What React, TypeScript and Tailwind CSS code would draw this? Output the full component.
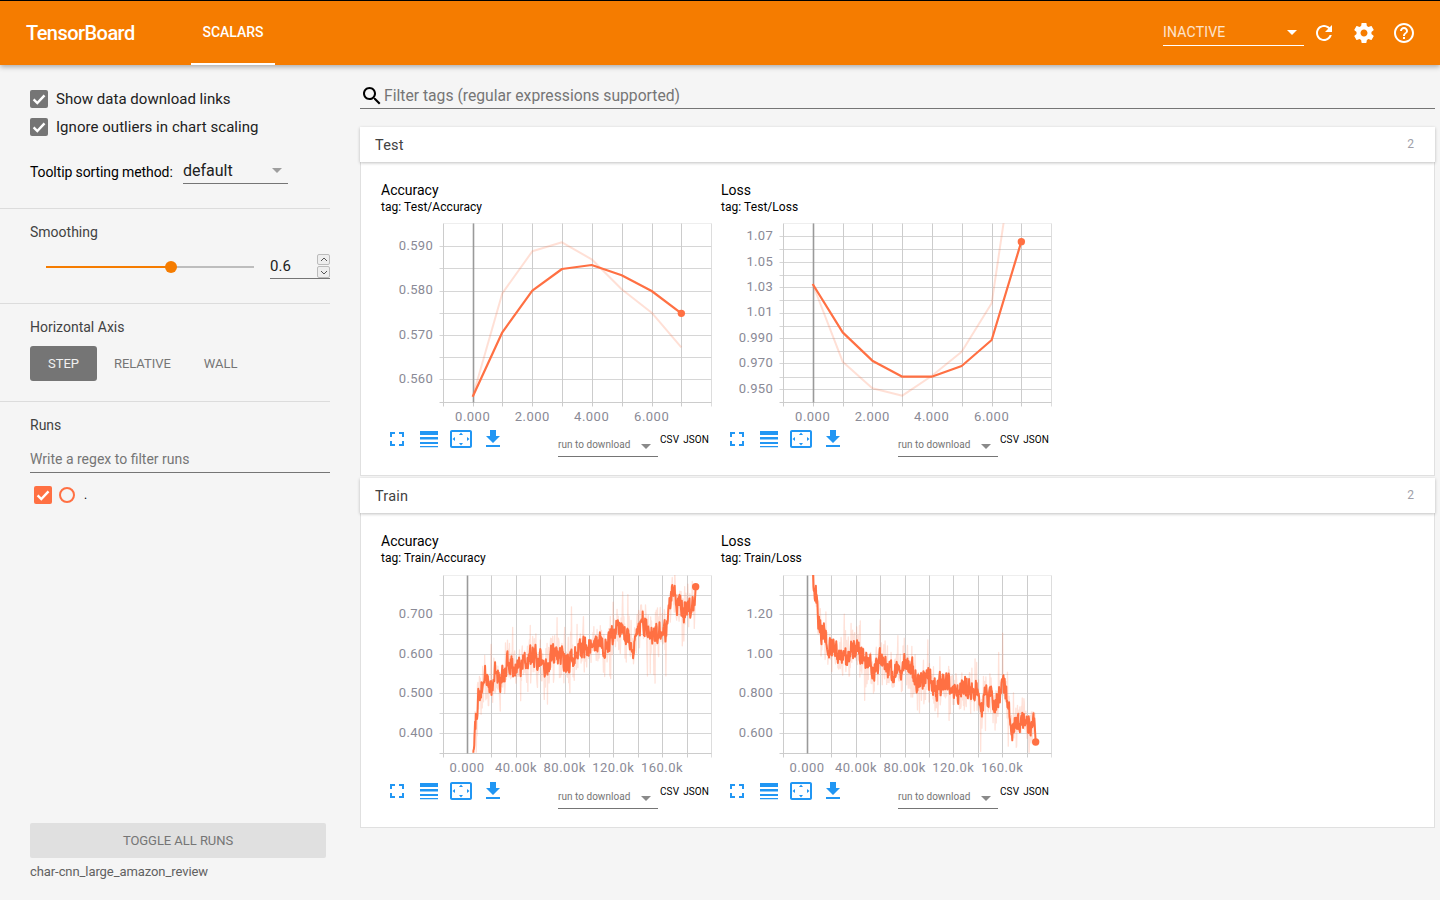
import React from "react";

type P = [number, number];

const ICON = {
  fullscreen: "M7 14H5v5h5v-2H7v-3zm-2-4h2V7h3V5H5v5zm12 7h-3v2h5v-5h-2v3zM14 5v2h3v3h2V5h-5z",
  reorder: "M3 4h18v4H3zM3 10h18v2.6H3zM3 15h18v2H3zM3 19h18v1.3H3z",
  overscan: "M12.01 5.5L10 8h4l-1.99-2.5zM18 10v4l2.5-1.99L18 10zM6 10l-2.5 2.01L6 14v-4zm8 6h-4l2.01 2.5L14 16zm7-13H3c-1.1 0-2 .9-2 2v14c0 1.1.9 2 2 2h18c1.1 0 2-.9 2-2V5c0-1.1-.9-2-2-2zm0 16.01H3V4.99h18v14.02z",
  download: "M19 9h-4V3H9v6H5l7 7 7-7zM5 18v2h14v-2H5z",
  refresh: "M17.65 6.35C16.2 4.9 14.21 4 12 4c-4.42 0-7.99 3.58-7.99 8s3.57 8 7.99 8c3.73 0 6.84-2.55 7.73-6h-2.08c-.82 2.33-3.04 4-5.65 4-3.31 0-6-2.69-6-6s2.69-6 6-6c1.66 0 3.14.69 4.22 1.78L13 11h7V4l-2.35 2.35z",
  settings: "M19.43 12.98c.04-.32.07-.64.07-.98s-.03-.66-.07-.98l2.11-1.65c.19-.15.24-.42.12-.64l-2-3.46c-.12-.22-.39-.3-.61-.22l-2.49 1c-.52-.4-1.08-.73-1.69-.98l-.38-2.65C14.46 2.18 14.25 2 14 2h-4c-.25 0-.46.18-.49.42l-.38 2.65c-.61.25-1.17.59-1.69.98l-2.49-1c-.23-.09-.49 0-.61.22l-2 3.46c-.13.22-.07.49.12.64l2.11 1.65c-.04.32-.07.65-.07.98s.03.66.07.98l-2.11 1.65c-.19.15-.24.42-.12.64l2 3.46c.12.22.39.3.61.22l2.49-1c.52.4 1.08.73 1.69.98l.38 2.65c.03.24.24.42.49.42h4c.25 0 .46-.18.49-.42l.38-2.65c.61-.25 1.17-.59 1.69-.98l2.49 1c.23.09.49 0 .61-.22l2-3.46c.12-.22.07-.49-.12-.64l-2.11-1.65zM12 15.5c-1.93 0-3.5-1.57-3.5-3.5s1.57-3.5 3.5-3.5 3.5 1.57 3.5 3.5-1.57 3.5-3.5 3.5z",
  help: "M11 18h2v-2h-2v2zm1-16C6.48 2 2 6.48 2 12s4.48 10 10 10 10-4.48 10-10S17.52 2 12 2zm0 18c-4.41 0-8-3.59-8-8s3.59-8 8-8 8 3.59 8 8-3.59 8-8 8zm0-14c-2.21 0-4 1.79-4 4h2c0-1.1.9-2 2-2s2 .9 2 2c0 2-3 1.75-3 5h2c0-2.25 3-2.5 3-5 0-2.21-1.79-4-4-4z",
  search: "M15.5 14h-.79l-.28-.27C15.41 12.59 16 11.11 16 9.5 16 5.91 13.09 3 9.5 3S3 5.91 3 9.5 5.91 16 9.5 16c1.61 0 3.09-.59 4.23-1.57l.27.28v.79l5 4.99L20.49 19l-4.99-5zm-6 0C7.01 14 5 11.99 5 9.5S7.01 5 9.5 5 14 7.01 14 9.5 11.99 14 9.5 14z",
};

function Icon({ d, className }: { d: string; className: string }) {
  return (
    <svg viewBox="0 0 24 24" className={className} fill="currentColor">
      <path d={d} />
    </svg>
  );
}

function rng(seed: number) {
  return () => {
    seed |= 0;
    seed = (seed + 0x6d2b79f5) | 0;
    let t = Math.imul(seed ^ (seed >>> 15), 1 | seed);
    t = (t + Math.imul(t ^ (t >>> 7), 61 | t)) ^ t;
    return ((t ^ (t >>> 14)) >>> 0) / 4294967296;
  };
}

function interp(pts: P[], x: number) {
  for (let i = 1; i < pts.length; i++) {
    if (x <= pts[i][0]) {
      const [x0, y0] = pts[i - 1];
      const [x1, y1] = pts[i];
      return y0 + ((y1 - y0) * (x - x0)) / (x1 - x0 || 1);
    }
  }
  return pts[pts.length - 1][1];
}

// Builds the noisy raw and smoothed series of a training curve.
function noisy(pts: P[], seed: number, endY: number): { raw: P[]; smooth: P[] } {
  const r = rng(seed);
  const raw: P[] = [];
  const smooth: P[] = [];
  const x0 = pts[0][0];
  const x1 = pts[pts.length - 1][0];
  let walk = 0;
  for (let x = x0; x <= x1; x += 1.2) {
    const base = interp(pts, x);
    walk = walk * 0.35 + (r() - 0.5) * 64;
    const s = base + walk;
    smooth.push([x, s]);
    const spike = r() < 0.1 ? (r() - 0.5) * 280 : (r() - 0.5) * 120;
    raw.push([x, s + spike]);
  }
  smooth.push([x1 + 2, endY]);
  raw.push([x1 + 2, endY]);
  return { raw, smooth };
}

type ChartProps = {
  title: string;
  tag: string;
  ox: number;
  oy: number;
  left: number;
  right: number;
  top: number;
  bottom: number;
  vs: number[];
  zero: number;
  hs: number[];
  yl: [string, number][];
  xl: [string, number][];
  labelY: number;
  raw: P[];
  smooth: P[];
  rawW?: number;
  smoothW?: number;
  rawO?: number;
};

function Chart(c: ChartProps) {
  const X = (z: number) => z / 3 + c.ox;
  const Y = (z: number) => z / 3 + c.oy;
  const sx = (z: number) => Math.round(X(z)) + 0.5;
  const sy = (z: number) => Math.round(Y(z)) + 0.5;
  const path = (pts: P[]) => pts.map((p, i) => `${i ? "L" : "M"}${X(p[0]).toFixed(2)} ${Y(p[1]).toFixed(2)}`).join("");
  const id = `clip-${c.tag.replace("/", "-")}`;
  const last = c.smooth[c.smooth.length - 1];
  return (
    <div className="w-[340px] flex flex-col">
      <div className="h-[61px] pt-[19px] text-black">
        <div className="text-[14px] leading-[18px]">{c.title}</div>
        <div className="text-[12px] leading-[15px] mt-px tracking-[0.05px]">tag: {c.tag}</div>
      </div>
      <svg width={340} height={204} className="block" style={{ fontFamily: "Roboto, sans-serif" }}>
        <defs>
          <clipPath id={id}>
            <rect x={X(c.left)} y={Y(c.top)} width={X(c.right) - X(c.left)} height={Y(c.bottom) - Y(c.top)} />
          </clipPath>
        </defs>
        <line x1={sx(c.left)} x2={sx(c.right)} y1={sy(c.top)} y2={sy(c.top)} stroke="#eeeeee" />
        <line x1={sx(c.right)} x2={sx(c.right)} y1={sy(c.top)} y2={sy(c.bottom) + 4} stroke="#dddddd" />
        {c.hs.map((h) => (
          <line key={h} x1={sx(c.left) - 4} x2={sx(c.right)} y1={sy(h)} y2={sy(h)} stroke="#d6d6d6" />
        ))}
        {c.vs.map((v) => (
          <line key={v} x1={sx(v)} x2={sx(v)} y1={sy(c.top)} y2={sy(c.bottom) + 4} stroke="#cccccc" />
        ))}
        <line x1={sx(c.left)} x2={sx(c.left)} y1={sy(c.top)} y2={sy(c.bottom) + 4} stroke="#cccccc" />
        <line x1={sx(c.left) - 4} x2={sx(c.right)} y1={sy(c.bottom)} y2={sy(c.bottom)} stroke="#cccccc" />
        <line x1={sx(c.zero)} x2={sx(c.zero)} y1={sy(c.top)} y2={sy(c.bottom)} stroke="#9a9a9a" strokeWidth={1.6} />
        <g clipPath={`url(#${id})`} fill="none" strokeLinejoin="round">
          <path d={path(c.raw)} stroke="#ff7043" strokeOpacity={c.rawO ?? 0.22} strokeWidth={c.rawW ?? 2} />
          <path d={path(c.smooth)} stroke="#ff7043" strokeWidth={c.smoothW ?? 2.2} />
        </g>
        <circle cx={X(last[0])} cy={Y(last[1])} r={3.7} fill="#ff7043" />
        {c.yl.map(([t, z]) => (
          <text key={t} x={52} y={Y(z) - 1} textAnchor="end" dominantBaseline="central" fontSize={13} letterSpacing={0.3} fill="#8a8a96">
            {t}
          </text>
        ))}
        {c.xl.map(([t, z]) => (
          <text key={t} x={X(z)} y={Y(c.labelY)} textAnchor="middle" dominantBaseline="central" fontSize={13} letterSpacing={0.5} fill="#8a8a96">
            {t}
          </text>
        ))}
      </svg>
      <div className="flex items-start h-[49px] text-[#2196f3]">
        <div className="flex mt-[1px]">
          <div className="w-8 flex justify-center"><Icon d={ICON.fullscreen} className="w-6 h-6" /></div>
          <div className="w-8 flex justify-center"><Icon d={ICON.reorder} className="w-6 h-6" /></div>
          <div className="w-8 flex justify-center"><Icon d={ICON.overscan} className="w-6 h-6" /></div>
          <div className="w-8 flex justify-center"><Icon d={ICON.download} className="w-6 h-6" /></div>
        </div>
        <div className="ml-[49px] w-[100px] h-[31px] border-b border-[#757575] flex items-center justify-between pr-[7px]">
          <span className="text-[10px] tracking-[0.03px] text-[#757575] mt-[6px]">run to download</span>
          <span className="w-0 h-0 border-x-[5px] border-x-transparent border-t-[5px] border-t-[#8a8a8a] mt-[10px]" />
        </div>
        <div className="ml-[2px] text-[10px] tracking-[0.1px] [word-spacing:1.5px] leading-[14px] mt-[7px] text-black whitespace-nowrap">
          CSV JSON
        </div>
      </div>
    </div>
  );
}

function CheckBox({ color, className }: { color: string; className?: string }) {
  return (
    <div className={`w-[18px] h-[18px] rounded-[2px] shrink-0 flex items-center justify-center ${color} ${className ?? ""}`}>
      <svg viewBox="0 0 18 18" className="w-[18px] h-[18px]" fill="none" stroke="white" strokeWidth={2.4}>
        <path d="M3.6 9.4l3.7 3.6 7.2-7.6" />
      </svg>
    </div>
  );
}

const vA = [338, 427, 517, 606, 695, 785, 875, 964];
const vL = [308, 398, 487, 577, 665, 755, 845, 934];
const vTA = [394, 468, 541, 614, 687, 760, 833, 906, 980];
const vTL = [364, 438, 511, 584, 657, 730, 803, 877, 950];
const hT = [224, 283, 343, 402, 461, 520, 580, 639];

const trainAcc = noisy(
  [[338, 730], [345, 620], [355, 530], [375, 470], [395, 510], [405, 440], [420, 480], [440, 430], [480, 440], [520, 410], [560, 440], [580, 390], [620, 430], [660, 390], [700, 370], [740, 370], [775, 320], [825, 390], [845, 290], [870, 340], [915, 340], [935, 220], [970, 270], [1005, 265]],
  7, 200
);
const trainLoss = noisy(
  [[308, 165], [320, 240], [327, 320], [345, 350], [352, 385], [380, 385], [400, 420], [430, 390], [460, 410], [490, 450], [515, 410], [545, 470], [590, 420], [620, 480], [650, 470], [680, 500], [715, 480], [745, 530], [770, 490], [800, 510], [815, 570], [830, 520], [850, 550], [880, 500], [892, 530], [905, 660], [915, 610], [940, 600], [975, 620]],
  21, 666
);

const charts: Record<string, ChartProps> = {
  ta: {
    title: "Accuracy", tag: "Test/Accuracy", ox: -21, oy: -53, left: 248, right: 1053, top: 160, bottom: 695,
    vs: vA, zero: 338, hs: [228, 295, 362, 428, 495, 562, 628],
    yl: [["0.590", 228], ["0.580", 362], ["0.570", 495], ["0.560", 628]],
    xl: [["0.000", 338], ["2.000", 517], ["4.000", 695], ["6.000", 875]], labelY: 740,
    raw: [[338, 680], [427, 370], [517, 244], [606, 217], [695, 268], [785, 358], [875, 428], [964, 532]],
    smooth: [[338, 680], [427, 487], [517, 362], [606, 297], [695, 285], [785, 316], [875, 363], [964, 430]],
  },
  tl: {
    title: "Loss", tag: "Test/Loss", ox: -11, oy: -53, left: 218, right: 1023, top: 160, bottom: 695,
    vs: vL, zero: 308, hs: [198, 238, 277, 315, 352, 390, 428, 467, 505, 543, 580, 620, 658],
    yl: [["1.07", 198], ["1.05", 277], ["1.03", 352], ["1.01", 428], ["0.990", 505], ["0.970", 580], ["0.950", 658]],
    xl: [["0.000", 308], ["2.000", 487], ["4.000", 665], ["6.000", 845]], labelY: 740,
    raw: [[308, 342], [398, 575], [487, 655], [577, 677], [665, 618], [755, 545], [845, 400], [885, 130]],
    smooth: [[308, 342], [398, 487], [487, 572], [577, 620], [665, 620], [755, 588], [845, 510], [934, 215]],
  },
  ra: {
    title: "Accuracy", tag: "Train/Accuracy", ox: -21, oy: -54, left: 248, right: 1053, top: 165, bottom: 698,
    vs: vTA, zero: 321, hs: hT,
    yl: [["0.700", 283], ["0.600", 402], ["0.500", 520], ["0.400", 639]],
    xl: [["0.000", 321], ["40.00k", 468], ["80.00k", 614], ["120.0k", 760], ["160.0k", 906]], labelY: 743,
    raw: trainAcc.raw, smooth: trainAcc.smooth, rawW: 1.3, smoothW: 2, rawO: 0.2,
  },
  rl: {
    title: "Loss", tag: "Train/Loss", ox: -11, oy: -54, left: 218, right: 1023, top: 165, bottom: 698,
    vs: vTL, zero: 291, hs: hT,
    yl: [["1.20", 283], ["1.00", 402], ["0.800", 520], ["0.600", 639]],
    xl: [["0.000", 291], ["40.00k", 438], ["80.00k", 584], ["120.0k", 730], ["160.0k", 877]], labelY: 743,
    raw: trainLoss.raw, smooth: trainLoss.smooth, rawW: 1.3, smoothW: 2, rawO: 0.2,
  },
};

function Card({ name, a, b, h }: { name: string; a: ChartProps; b: ChartProps; h: string }) {
  return (
    <section>
      <div className="relative z-10 h-[35px] bg-white flex items-center justify-between pl-[15px] pr-[21px] pt-[2px] shadow-[0_1px_3px_rgba(0,0,0,0.25)]">
        <span className="text-[14.5px] tracking-[0.2px] text-[#424242]">{name}</span>
        <span className="text-[12px] text-[#a0a0a8] mt-[-3px]">2</span>
      </div>
      <div className={`bg-white border-x border-b border-[#e0e0e0] pl-[20px] flex ${h}`}>
        <Chart {...a} />
        <Chart {...b} />
      </div>
    </section>
  );
}

export default function App() {
  return (
    <div className="w-[1440px] h-[900px] overflow-hidden bg-[#f5f5f5] flex flex-col" style={{ fontFamily: "Roboto, sans-serif" }}>
      <header className="relative z-20 h-[65px] shrink-0 bg-[#f57c00] border-t border-black text-white flex items-stretch pl-[26px] shadow-[0_2px_5px_rgba(0,0,0,0.3)]">
        <div className="w-[165px] flex items-center text-[20px] font-medium tracking-[-0.55px] leading-none pb-[1px]">TensorBoard</div>
        <div className="w-[84px] flex items-center justify-center text-[14px] font-medium border-b-2 border-white">SCALARS</div>
        <div className="ml-auto flex items-center pr-[24px]">
          <div className="w-[141px] h-[28px] border-b border-white flex items-center justify-between pr-[7px] pt-[2px] mt-[-2px]">
            <span className="text-[14px] text-white/80 tracking-[0.2px]">INACTIVE</span>
            <span className="w-0 h-0 border-x-[5px] border-x-transparent border-t-[5px] border-t-white" />
          </div>
          <Icon d={ICON.refresh} className="w-6 h-6 ml-[8px]" />
          <Icon d={ICON.settings} className="w-6 h-6 ml-[16px]" />
          <Icon d={ICON.help} className="w-6 h-6 ml-[16px]" />
        </div>
      </header>
      <div className="flex flex-1 min-h-0">
        <aside className="w-[360px] shrink-0 flex flex-col pr-[30px]">
          <div className="h-[144px] border-b border-[#dcdcdc] pl-[30px] pt-[25px]">
            <div className="flex items-center h-[18px] gap-2 text-[15px] text-[#212121] tracking-[0.02px]">
              <CheckBox color="bg-[#757575]" />
              Show data download links
            </div>
            <div className="flex items-center h-[18px] gap-2 mt-[10px] text-[15px] text-[#212121] tracking-[0.04px]">
              <CheckBox color="bg-[#757575]" />
              Ignore outliers in chart scaling
            </div>
            <div className="flex items-start mt-[22px] text-black">
              <span className="text-[14px] tracking-[-0.1px] leading-[24px] mt-[2px] w-[153px] whitespace-nowrap">Tooltip sorting method:</span>
              <div className="w-[105px] h-[26px] border-b border-[#757575] flex items-center justify-between pr-[6px]">
                <span className="text-[16px] text-[#212121] mt-[1px]">default</span>
                <span className="w-0 h-0 border-x-[5px] border-x-transparent border-t-[5px] border-t-[#9e9e9e]" />
              </div>
            </div>
          </div>
          <div className="h-[95px] border-b border-[#dcdcdc] pl-[30px] pt-[14px]">
            <div className="text-[14px] leading-[18px] text-[#424242]">Smoothing</div>
            <div className="flex items-center mt-[8px] h-[36px]">
              <div className="relative ml-[16px] w-[208px] h-[2px] bg-[#bdbdbd]">
                <div className="h-[2px] w-[125px] bg-[#f57c00]" />
                <div className="absolute left-[119px] top-[-5px] w-3 h-3 rounded-full bg-[#f57c00]" />
              </div>
              <div className="relative ml-[16px] w-[60px] h-[24px] border-b border-[#757575] text-[15px] text-[#212121] leading-[24px]">
                <span className="absolute left-0 top-[-1px]">0.6</span>
                <div className="absolute right-0 top-[-1px] w-[13px] h-[11px] border border-[#bbb] rounded-[2px] bg-[#eee] flex items-center justify-center">
                  <svg viewBox="0 0 8 5" className="w-2 h-[5px]" fill="none" stroke="#555"><path d="M1 4l3-3 3 3" /></svg>
                </div>
                <div className="absolute right-0 top-[11px] w-[13px] h-[12px] border border-[#bbb] rounded-[2px] bg-[#eee] flex items-center justify-center">
                  <svg viewBox="0 0 8 5" className="w-2 h-[5px]" fill="none" stroke="#555"><path d="M1 1l3 3 3-3" /></svg>
                </div>
              </div>
            </div>
          </div>
          <div className="h-[98px] border-b border-[#dcdcdc] pl-[30px] pt-[14px]">
            <div className="text-[14px] leading-[18px] text-[#424242]">Horizontal Axis</div>
            <div className="flex items-center mt-[10px] text-[13px] text-[#757575]">
              <div className="w-[67px] h-[35px] bg-[#757575] text-white/90 rounded-[3px] flex items-center justify-center">STEP</div>
              <span className="ml-[17px] tracking-[-0.05px]">RELATIVE</span>
              <span className="ml-[33px]">WALL</span>
            </div>
          </div>
          <div className="pl-[30px] pt-[14px]">
            <div className="text-[14px] leading-[18px] text-[#424242]">Runs</div>
            <div className="h-[31px] mt-[8px] border-b border-[#757575] text-[14px] text-[#757575] pt-[6px] leading-[22px]">Write a regex to filter runs</div>
            <div className="flex items-center h-[18px] mt-[13px] ml-[4px]">
              <CheckBox color="bg-[#ff7043]" />
              <div className="ml-[7px] w-[16px] h-[16px] rounded-full border-2 border-[#ff7043]" />
              <span className="ml-[9px] text-[12px] text-black">.</span>
            </div>
          </div>
          <div className="mt-auto pl-[30px] pb-[19px]">
            <div className="w-[296px] h-[35px] bg-[#e0e0e0] rounded-[2px] flex items-center justify-center text-[13px] tracking-[-0.05px] text-[#757575]">TOGGLE ALL RUNS</div>
            <div className="text-[13px] tracking-[-0.08px] text-[#616161] mt-[5px] leading-[18px]">char-cnn_large_amazon_review</div>
          </div>
        </aside>
        <main className="flex-1 pr-[5px]">
          <div className="h-[44px] border-b border-[#757575] flex items-end text-[#757575]">
            <Icon d={ICON.search} className="w-6 h-6 text-black" />
            <span className="text-[15.7px] leading-[24px]">Filter tags (regular expressions supported)</span>
          </div>
          <div className="mt-[18px]">
            <Card name="Test" a={charts.ta} b={charts.tl} h="h-[314px]" />
          </div>
          <div className="mt-[2px]">
            <Card name="Train" a={charts.ra} b={charts.rl} h="h-[315px]" />
          </div>
        </main>
      </div>
    </div>
  );
}
